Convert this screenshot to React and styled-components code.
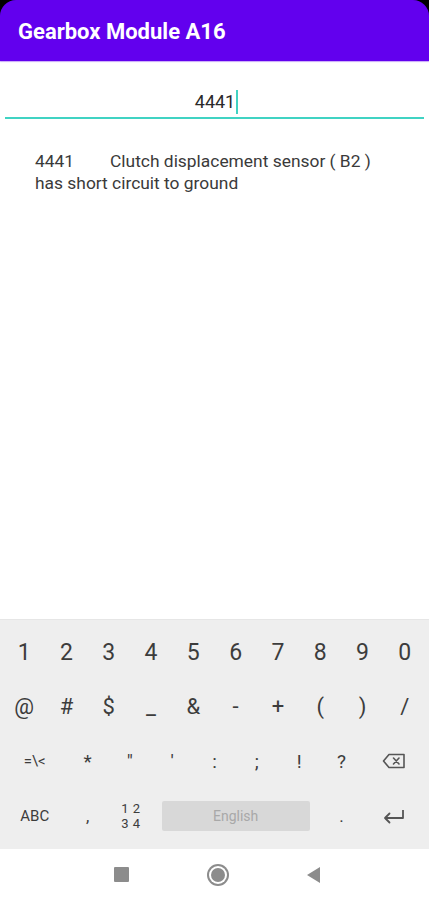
import React from "react";
import styled, { createGlobalStyle } from "styled-components";

const GlobalStyle = createGlobalStyle`
    html, body {
        margin: 0;
        padding: 0;
        background: #ffffff;
    }
    body {
        font-family: Roboto, "Noto Sans", "Liberation Sans", sans-serif;
    }
`;

const numberKeys = ["1", "2", "3", "4", "5", "6", "7", "8", "9", "0"];
const symbolKeys = ["@", "#", "$", "_", "&", "-", "+", "(", ")", "/"];
const thirdKeys = ["*", "\"", "'", ":", ";", "!", "?"];

const fault = { code: "4441", text: "Clutch displacement sensor ( B2 ) has short circuit to ground" };

const BackspaceIcon = () => (
    <svg width="24" height="16" viewBox="0 0 24 16" fill="none" stroke="#555" strokeWidth="1.6">
        <path d="M7 1.5 H22 V14.5 H7 L1.5 8 Z" strokeLinejoin="round" />
        <path d="M11.5 5 L17 11 M17 5 L11.5 11" strokeLinecap="round" />
    </svg>
);

const EnterIcon = () => (
    <svg width="24" height="16" viewBox="0 0 24 16" fill="none" stroke="#555" strokeWidth="1.8">
        <path d="M21 2 V10 H3" strokeLinejoin="round" />
        <path d="M7.5 5.5 L3 10 L7.5 14.5" strokeLinecap="round" strokeLinejoin="round" />
    </svg>
);

const App = () => {
    return (
        <>
            <GlobalStyle />
            <Screen>
                <TopFrame>
                    <AppBar>
                        <Title>Gearbox Module A16</Title>
                    </AppBar>
                </TopFrame>
                <Content>
                    <SearchField>
                        <SearchText>4441</SearchText>
                        <Caret />
                    </SearchField>
                    {/* tab stop puts the description at the same column as the app */}
                    <Result>{`${fault.code}\t${fault.text}`}</Result>
                </Content>
                <Keyboard>
                    <KeyRow cols="repeat(10, 1fr)">
                        {numberKeys.map((k) => (
                            <Key key={k} size={23}>{k}</Key>
                        ))}
                    </KeyRow>
                    <KeyRow cols="repeat(10, 1fr)">
                        {symbolKeys.map((k) => (
                            <Key key={k} size={22}>{k}</Key>
                        ))}
                    </KeyRow>
                    <KeyRow cols="1.5fr repeat(7, 1fr) 1.5fr">
                        <Key size={15}>=\&lt;</Key>
                        {thirdKeys.map((k) => (
                            <Key key={k} size={19}>{k}</Key>
                        ))}
                        <Key><BackspaceIcon /></Key>
                    </KeyRow>
                    <KeyRow cols="1.5fr 1fr 1fr 4fr 1fr 1.5fr">
                        <Key size={15}>ABC</Key>
                        <Key size={17}>,</Key>
                        <Key>
                            <Stacked>
                                <span>1 2</span>
                                <span>3 4</span>
                            </Stacked>
                        </Key>
                        <Key>
                            <SpaceBar>English</SpaceBar>
                        </Key>
                        <Key size={17}>.</Key>
                        <Key><EnterIcon /></Key>
                    </KeyRow>
                </Keyboard>
                <NavBar>
                    <NavSquare />
                    <NavHome />
                    <NavBack />
                </NavBar>
            </Screen>
        </>
    );
};

const Screen = styled.div`
    width: 429px;
    height: 900px;
    display: flex;
    flex-direction: column;
    background: #ffffff;
    overflow: hidden;
`;

const TopFrame = styled.div`
    background: #000000;
`;

const AppBar = styled.header`
    height: 61px;
    background: #6200ee;
    border-radius: 16px 16px 0 0;
    display: flex;
    align-items: center;
    padding-left: 18px;
    box-shadow: 0 1px 1px rgba(98, 0, 238, 0.35);
    position: relative;
    z-index: 1;
`;

const Title = styled.h1`
    margin: 0;
    color: #ffffff;
    font-size: 22px;
    font-weight: 700;
    padding-top: 2px;
`;

const Content = styled.main`
    flex: 1;
    padding: 0 5px;
`;

const SearchField = styled.div`
    margin-top: 26px;
    height: 30px;
    border-bottom: 2px solid #40d3c3;
    display: flex;
    justify-content: center;
    align-items: center;
    padding-left: 4px;
`;

const SearchText = styled.span`
    font-size: 18px;
    color: #2a2a2a;
    line-height: 24px;
`;

const Caret = styled.span`
    width: 2px;
    height: 24px;
    margin-left: 1px;
    background: #40d3c3;
`;

const Result = styled.p`
    margin: 31px 40px 0 30px;
    font-size: 17.4px;
    line-height: 22px;
    color: #3a3a3a;
    white-space: pre-wrap;
    tab-size: 75px;
`;

const Keyboard = styled.section`
    height: 230px;
    background: #eeeeee;
    padding: 5px 3px 0 3px;
    box-sizing: border-box;
    border-top: 1px solid #e6e6e6;
`;

const KeyRow = styled.div`
    display: grid;
    grid-template-columns: ${({ cols }) => cols};
    height: 54.5px;
`;

const Key = styled.div`
    display: flex;
    align-items: center;
    justify-content: center;
    font-size: ${({ size }) => size || 18}px;
    color: #3c3c3c;
`;

const Stacked = styled.div`
    display: flex;
    flex-direction: column;
    align-items: center;
    font-size: 13px;
    line-height: 15px;
    color: #3c3c3c;
    letter-spacing: 0.5px;
    padding-left: 2px;
`;

const SpaceBar = styled.div`
    width: 148px;
    height: 30px;
    background: #d8d8d8;
    border-radius: 2px;
    display: flex;
    align-items: center;
    justify-content: center;
    font-size: 14px;
    color: #a8a8a8;
`;

const NavBar = styled.nav`
    height: 51px;
    background: #ffffff;
    display: flex;
    align-items: center;
    justify-content: center;
    gap: 82px;
    padding-left: 4px;
`;

const NavSquare = styled.span`
    width: 15px;
    height: 15px;
    background: #8c8c8c;
    border-radius: 1px;
`;

const NavHome = styled.span`
    width: 14px;
    height: 14px;
    border-radius: 50%;
    background: #8c8c8c;
    box-shadow: 0 0 0 2px #ffffff, 0 0 0 4px #8c8c8c;
`;

const NavBack = styled.span`
    width: 0;
    height: 0;
    border-top: 8px solid transparent;
    border-bottom: 8px solid transparent;
    border-right: 13px solid #8c8c8c;
`;

export default App;
